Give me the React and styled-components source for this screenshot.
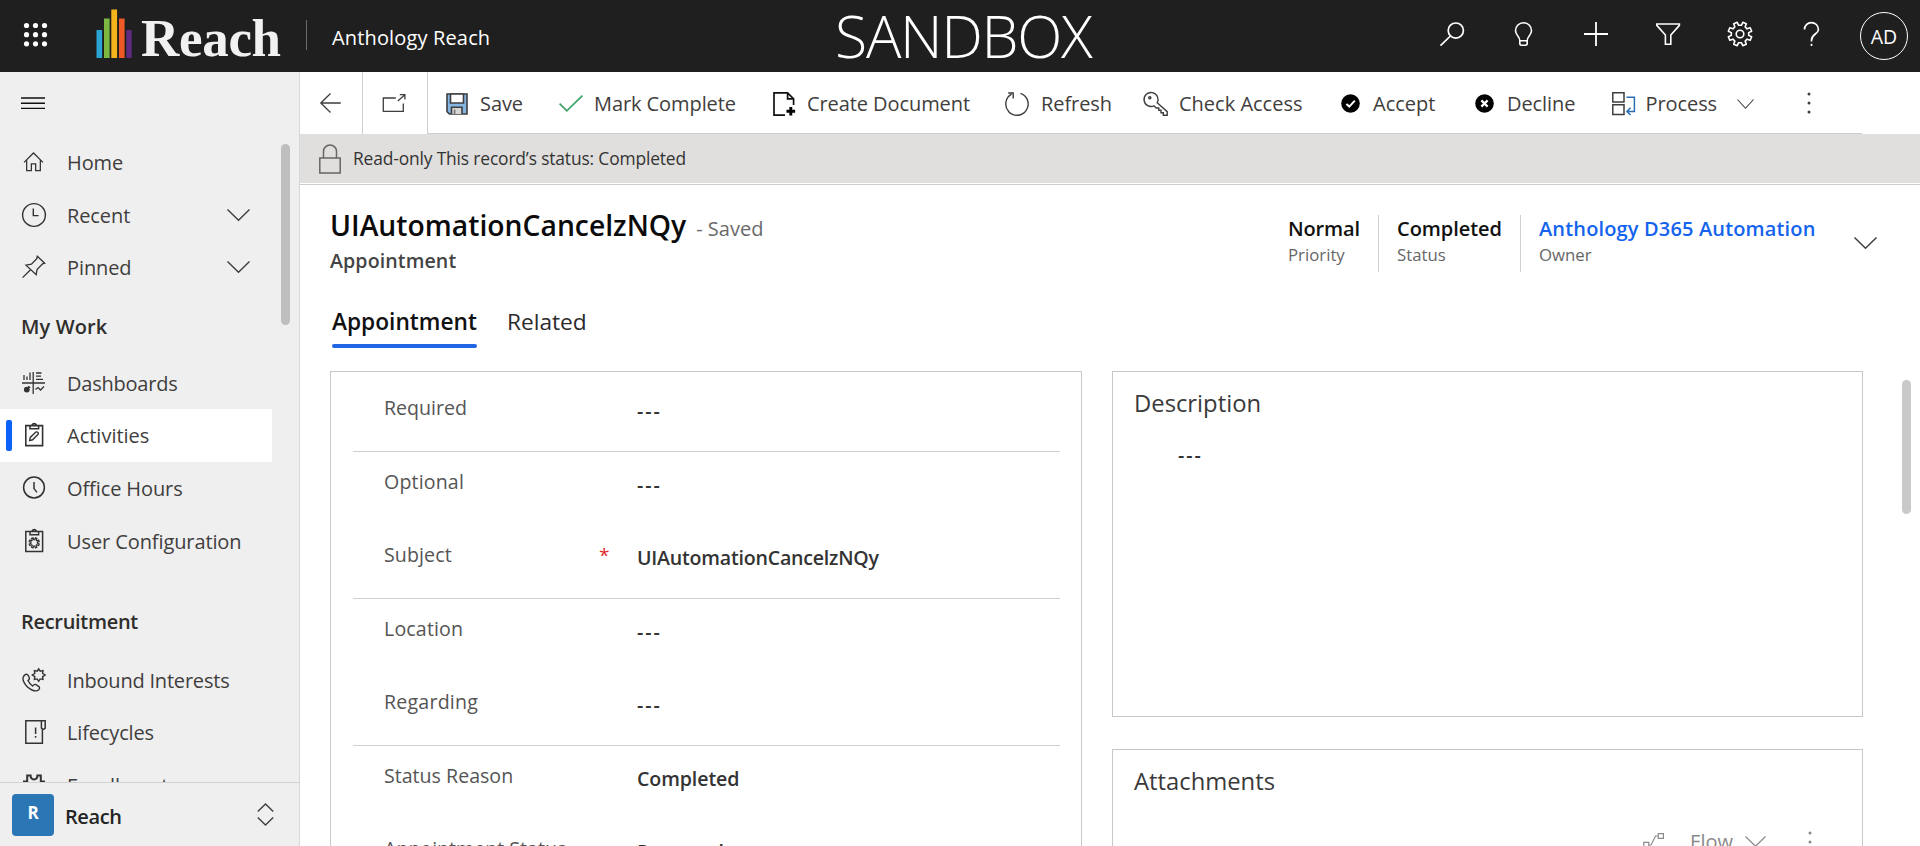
import React from "react";
import styled, { createGlobalStyle } from "styled-components";

const Global = createGlobalStyle`
  * { box-sizing: border-box; }
  body { margin: 0; overflow: hidden; }
`;

const Page = styled.div`
  width: 1920px;
  height: 846px;
  display: flex;
  flex-direction: column;
  overflow: hidden;
  background: #fff;
  color: #3f3e3d;
  font-family: "Open Sans", "Noto Sans", sans-serif;
  font-size: 20px;
  line-height: 28px;
  white-space: nowrap;
`;

const Label = styled.span`
  display: block;
  letter-spacing: ${(p) => p.$ls || 0}px;
`;

const Icon = styled.svg`
  display: block;
  flex: none;
  width: ${(p) => p.$w || 24}px;
  height: ${(p) => p.$h || p.$w || 24}px;
  fill: none;
  stroke: currentColor;
  stroke-width: ${(p) => p.$s || 1.5};
  overflow: visible;
`;

/* top bar */
const TopBar = styled.header`
  flex: none;
  height: 72px;
  display: flex;
  background: #1f1f1f;
  color: #fff;
`;
const Brand = styled.div`
  width: 835px;
  display: flex;
  align-items: flex-start;
  padding-left: 24px;
`;
const WaffleSlot = styled.div`
  width: 72px;
  padding-top: 23px;
`;
const BarsSlot = styled.div`
  width: 45px;
  padding-top: 9px;
`;
const LogoName = styled.div`
  width: 165px;
  padding-top: 8px;
  font: bold 53px/60px "Liberation Serif", serif;
  letter-spacing: -0.3px;
  color: #f1f1f1;
`;
const BrandDivider = styled.div`
  width: 1px;
  height: 30px;
  margin: 20px 25px 0 0;
  background: #6b6b6b;
`;
const AppName = styled(Label)`
  padding-top: 24px;
  font-weight: 500;
`;
const Environment = styled.div`
  width: 605px;
  font-size: 59px;
  font-weight: 300;
  line-height: 70px;
  letter-spacing: ${(p) => p.$ls}px;
`;
const TopActions = styled.nav`
  display: flex;
  gap: 48px;
  padding-top: 22px;
`;
const Avatar = styled.div`
  width: 48px;
  height: 48px;
  margin: 12px 0 0 36px;
  border: 1.5px solid #fff;
  border-radius: 50%;
  text-align: center;
  font-size: 19.5px;
  line-height: 48px;
  font-weight: 500;
`;

/* shell */
const Shell = styled.div`
  flex: 1;
  min-height: 0;
  display: flex;
`;
const Sidebar = styled.aside`
  flex: none;
  width: 300px;
  display: flex;
  flex-direction: column;
  background: #efefef;
  border-right: 1px solid #d6d6d6;
`;
const MenuButton = styled.div`
  flex: none;
  height: 64px;
  padding: 25px 0 0 21px;
  color: #111;
`;
const NavScroll = styled.div`
  flex: 1;
  min-height: 0;
  overflow: hidden;
  display: flex;
  justify-content: space-between;
`;
const NavList = styled.div`
  width: 272px;
`;
const ScrollThumb = styled.div`
  flex: none;
  width: 9px;
  height: ${(p) => p.$h}px;
  border-radius: 5px;
  background: ${(p) => p.$c};
`;
const NavThumb = styled(ScrollThumb)`
  margin: 8px 9px 0 0;
`;
const NavItem = styled.div`
  height: 52.6px;
  display: flex;
  align-items: center;
  padding-left: 6px;
  background: ${(p) => (p.$active ? "#fff" : "transparent")};
`;
const ActiveMark = styled.div`
  width: 6px;
  height: 31px;
  margin-right: 10px;
  border-radius: 2px;
  background: ${(p) => (p.$on ? "#0a62fb" : "transparent")};
`;
const NavIcon = styled.div`
  width: 45px;
  color: #333;
`;
const NavText = styled(Label)`
  flex: 1;
  padding-top: 2px;
`;
const NavChevron = styled.div`
  padding-right: 22px;
`;
const NavGroup = styled.div`
  height: ${(p) => p.$h}px;
  padding: ${(p) => p.$pt}px 0 0 21px;
  font-weight: 600;
  color: #2f2e2d;
`;
const AreaSwitch = styled.div`
  flex: none;
  height: 64px;
  border-top: 1px solid #d2d2d2;
  display: flex;
  align-items: center;
  padding: 0 25px 0 12px;
`;
const AreaBadge = styled.div`
  width: 42px;
  height: 42px;
  margin-right: 11px;
  border-radius: 4px;
  background: #2b76b5;
  color: #fff;
  font-size: 17px;
  font-weight: 700;
  line-height: 37px;
  text-align: center;
`;
const AreaName = styled(Label)`
  flex: 1;
  padding-top: 4px;
  font-weight: 600;
  color: #242424;
`;

/* main */
const Main = styled.main`
  flex: 1;
  min-width: 0;
  display: flex;
  flex-direction: column;
`;
const CommandBar = styled.div`
  flex: none;
  height: 62px;
  display: flex;
`;
const CommandCell = styled.div`
  width: ${(p) => p.$w}px;
  display: flex;
  justify-content: center;
  align-items: center;
  border-right: 1px solid #cfcfcf;
`;
const Commands = styled.div`
  width: 1434px;
  display: flex;
  align-items: center;
  border-bottom: 1px solid #cfcdcc;
  padding-left: 18px;
`;
const Command = styled.div`
  width: ${(p) => p.$w}px;
  display: flex;
  align-items: center;
  gap: ${(p) => p.$gap || 11}px;
  padding-top: 2px;
`;
const Banner = styled.div`
  flex: none;
  height: 51px;
  display: flex;
  align-items: center;
  gap: 12px;
  padding: 0 0 2px 19px;
  background: linear-gradient(#e0dfde 0 49px, #fff 49px 50px, #cdcdcd 50px);
  font-size: 17.4px;
  color: #333;
`;
const BannerText = styled(Label)`
  padding-bottom: 1px;
`;
const RecordHeader = styled.div`
  flex: none;
  height: 117px;
  display: flex;
  padding-left: 30px;
`;
const Heading = styled.div`
  width: 958px;
`;
const TitleRow = styled.div`
  display: flex;
  align-items: baseline;
  gap: 10px;
  height: 57px;
  padding-top: 21px;
`;
const Title = styled(Label)`
  font-size: 28.3px;
  line-height: 38px;
  font-weight: 600;
  color: #0b0b0b;
`;
const Saved = styled(Label)`
  color: #6a6a6a;
  font-size: 20px;
`;
const Entity = styled(Label)`
  padding-top: 5px;
  font-size: 19.6px;
  font-weight: 600;
  color: #444;
`;
const Summary = styled.div`
  width: ${(p) => p.$w}px;
  height: 57px;
  margin-top: 30px;
  border-right: ${(p) => (p.$last ? "0" : "1px solid #cfcfcf")};
  margin-right: 18px;
`;
const SummaryValue = styled(Label)`
  font-size: 20px;
  font-weight: 600;
  color: ${(p) => (p.$link ? "#1463ee" : "#111")};
`;
const SummaryName = styled(Label)`
  font-size: 16.8px;
  line-height: 24px;
  color: #666;
`;
const Expand = styled.div`
  padding-top: 52px;
`;
const Tabs = styled.div`
  flex: none;
  height: 69px;
  display: flex;
  gap: 30px;
  padding-left: 32px;
`;
const Tab = styled.div`
  height: 46px;
  padding-top: 4px;
  font-size: 22.7px;
  line-height: 32px;
  font-weight: ${(p) => (p.$on ? 600 : 400)};
  color: ${(p) => (p.$on ? "#111" : "#2b2b2b")};
`;
const TabLine = styled.div`
  height: 4px;
  margin-top: 6px;
  border-radius: 2px;
  background: #2266e3;
`;
const Body = styled.div`
  flex: 1;
  min-height: 0;
  display: flex;
  padding-left: 30px;
`;
const FormCard = styled.section`
  width: 752px;
  height: 520px;
  margin-right: 30px;
  padding: 0 21px 0 22px;
  border: 1px solid #c8c8c8;
`;
const FieldGroup = styled.div`
  padding-top: ${(p) => p.$pt}px;
  height: ${(p) => p.$h}px;
  border-bottom: 1px solid #d0cfce;
`;
const Field = styled.div`
  height: 73px;
  display: grid;
  grid-template-columns: 215px 38px 1fr;
  padding-left: 31px;
`;
const FieldName = styled(Label)`
  font-size: 19.6px;
  color: #555;
`;
const Required = styled.span`
  font-size: 19px;
  color: #e02b2b;
`;
const FieldValue = styled(Label)`
  padding-top: 3px;
  font-size: 19.6px;
  font-weight: 600;
  color: #333;
`;
const SideColumn = styled.div`
  width: 751px;
`;
const SideCard = styled.section`
  height: ${(p) => p.$h}px;
  margin-bottom: 32px;
  padding: 15px 21px;
  border: 1px solid #c8c8c8;
`;
const SideTitle = styled(Label)`
  font-size: 23.8px;
  line-height: 32px;
  color: #3a3a3a;
`;
const EmptyValue = styled.div`
  padding: 22px 0 0 44px;
  font-size: 19.6px;
  font-weight: 600;
  letter-spacing: 2px;
  color: #333;
`;
const SubCommands = styled.div`
  display: flex;
  justify-content: flex-end;
  align-items: flex-start;
  padding: 29px 29px 0 0;
  color: #8a8a8a;
`;
const FlowSlot = styled.div`
  padding-top: ${(p) => p.$pt}px;
`;
const FlowName = styled(Label)`
  margin: 2px 12px 0 25px;
`;
const FlowMore = styled.div`
  padding: 5px 0 0 42px;
`;
const BodyThumb = styled(ScrollThumb)`
  margin: 9px 0 0 39px;
`;

/* icons */
const Chevron = ({ w = 23, h = 12, s }) => (
  <Icon viewBox={`0 0 ${w} ${h}`} $w={w} $h={h} $s={s}>
    <path d={`M.5 .5 L${w / 2} ${h - 0.7} L${w - 0.5} .5`} />
  </Icon>
);
const MoreDots = () => (
  <Icon viewBox="0 0 4 22" $w={4} $h={22}>
    <g fill="currentColor" stroke="none">
      <circle cx="2" cy="2" r="1.5" />
      <circle cx="2" cy="11" r="1.5" />
      <circle cx="2" cy="20" r="1.5" />
    </g>
  </Icon>
);
const Waffle = () => (
  <Icon viewBox="0 0 24 24">
    <g fill="#fff" stroke="none">
      {[2.5, 11.7, 20.8].map((y) =>
        [2.5, 11.5, 20.5].map((x) => <circle key={`${x}-${y}`} cx={x} cy={y} r="2.6" />)
      )}
    </g>
  </Icon>
);
const LogoBars = () => (
  <Icon viewBox="0 0 36 49" $w={36} $h={49}>
    <g stroke="none">
      <rect x="0.5" y="21" width="5.6" height="28" fill="#2ba3d4" />
      <rect x="8" y="9.5" width="5.6" height="39.5" fill="#7db843" />
      <rect x="15.3" y="0.5" width="5.8" height="48.5" fill="#f6b31c" />
      <rect x="23" y="9.5" width="5.6" height="39.5" fill="#ee5a25" />
      <rect x="30.3" y="21" width="5.4" height="28" fill="#5e2a82" />
    </g>
  </Icon>
);

function gearPath(cx, cy, ro, ri, n) {
  const pts = [];
  const step = (Math.PI * 2) / n;
  for (let i = 0; i < n; i++) {
    const a = i * step - Math.PI / 2 + step / 2;
    [[-0.3, ri], [-0.2, ro], [0.2, ro], [0.3, ri]].forEach(([o, r]) => {
      pts.push(`${(cx + r * Math.cos(a + o * step)).toFixed(2)} ${(cy + r * Math.sin(a + o * step)).toFixed(2)}`);
    });
  }
  return `M${pts.join("L")}Z`;
}

const SearchIcon = () => (
  <Icon viewBox="0 0 24 24" $s={1.7}>
    <circle cx="15.8" cy="8.6" r="7.6" />
    <path d="M10.4 14 L.5 23.6" />
  </Icon>
);
const BulbIcon = () => (
  <Icon viewBox="0.5 0 24 24" $s={1.6}>
    <path d="M8.3 18.7 C8.3 14.5 4 12.8 4 8.7 A8 8 0 0 1 20 8.7 C20 12.8 15.7 14.5 15.7 18.7 Z M8.3 18.7 V21.3 Q8.3 23.2 10 23.2 H14 Q15.7 23.2 15.7 21.3 V18.7" />
  </Icon>
);
const PlusIcon = () => (
  <Icon viewBox="0 0 24 24" $s={1.8}>
    <path d="M12 0 V24 M0 12 H24" />
  </Icon>
);
const FunnelIcon = () => (
  <Icon viewBox="0 0 24 24" $s={1.6}>
    <path d="M.8 2 H23.4 V3.4 L14.8 13 V22.2 H9.4 V13 L.8 3.4 Z" />
  </Icon>
);
const GearIcon = () => (
  <Icon viewBox="0 0 24 24" $s={1.6}>
    <path d={gearPath(12, 12, 12, 8.8, 8)} strokeLinejoin="round" />
    <circle cx="12" cy="12" r="3.8" />
  </Icon>
);
const HelpIcon = () => (
  <Icon viewBox="0.5 0 24 24" $s={1.7}>
    <path d="M5 7.6 A6.9 6.9 0 0 1 18.9 7.4 C18.9 12.2 12 12 12 18.2 V19.4" />
    <path d="M12 21.8 V24" />
  </Icon>
);
const BackIcon = () => (
  <Icon viewBox="0 0 22 20" $w={22} $h={20} $s={1.3}>
    <path d="M10.5 .5 L.8 10 L10.5 19.5 M.8 10 H20.8" />
  </Icon>
);
const PopOutIcon = () => (
  <Icon viewBox="0.7 0 24 18" $w={24} $h={18} $s={1.3}>
    <path d="M13.5 4 H1 V17.3 H21 V9.5 M15.5 7 L22.6 .7 M17.5 .7 H22.6 V5.6" />
  </Icon>
);
const SaveIcon = () => (
  <Icon viewBox="0 0 22 22" $w={22} $h={22} $s={1.6}>
    <path d="M1 1 H21 V21 H3.4 L1 18.6 Z" fill="#86b6e3" />
    <path d="M4.5 1 H17.5 V10 H4.5 Z" fill="#fff" />
    <path d="M5.5 21 V14.3 H16 V21" fill="#d5d5d5" />
    <path d="M8.6 16.5 V21" stroke="#777" />
  </Icon>
);
const CheckIcon = () => (
  <Icon viewBox="0 0 24 17" $w={24} $h={17} $s={1.7}>
    <path d="M.6 8.6 L7.8 15.8 L23.4 .6" stroke="#3fa36a" />
  </Icon>
);
const DocumentIcon = () => (
  <Icon viewBox="0 0 24 24" $s={1.7}>
    <path d="M12 23.2 H1 V.9 H14.6 L20.6 6.8 V13 M14.6 .9 V6.8 H20.6" stroke="#111" />
    <path d="M17.8 15 V23.6 M13.5 19.3 H22.1" stroke="#000" strokeWidth="2.9" />
  </Icon>
);
const RefreshIcon = () => (
  <Icon viewBox="0 0 24 24" $s={1.4}>
    <path d="M15.5 1.4 A11.2 11.2 0 1 1 6.6 2.2 M3.2 1 H8.2 V6.4" />
  </Icon>
);
const KeyIcon = () => (
  <Icon viewBox="0 0 24 24" $s={1.4}>
    <path d="M13.2 10.8 L23.2 19.6 V23.2 H19.3 V20.8 H17 V18.3 H14.8 V16 H12.2 L10 13.8 A7 7 0 1 1 13.2 10.8 Z" />
    <circle cx="5.8" cy="5.8" r="1.1" />
  </Icon>
);
const AcceptIcon = () => (
  <Icon viewBox="0 0 19 19" $w={19}>
    <circle cx="9.5" cy="9.5" r="9.3" fill="#000" stroke="none" />
    <path d="M5.4 9.9 L8.3 12.6 L13.8 6.6" stroke="#fff" strokeWidth="2" />
  </Icon>
);
const DeclineIcon = () => (
  <Icon viewBox="0 0 19 19" $w={19}>
    <circle cx="9.5" cy="9.5" r="9.3" fill="#000" stroke="none" />
    <path d="M6.4 6.4 L12.6 12.6 M12.6 6.4 L6.4 12.6" stroke="#fff" strokeWidth="2.2" />
  </Icon>
);
const ProcessIcon = () => (
  <Icon viewBox="0 0 24 24" $s={1.5}>
    <path d="M.8 .8 H12 V10 H.8 Z M.8 12.8 H12 V22.4 H.8 Z" />
    <path d="M14.5 5.2 H22.4 V19.5 H15.2 M18.6 15.8 L14.9 19.5 L18.6 23" stroke="#2a6fb5" />
  </Icon>
);
const LockIcon = () => (
  <Icon viewBox="0 0 22 30" $w={22} $h={30} $s={1.5}>
    <path d="M.8 14 H21.2 V29 H.8 Z M4.5 14 V7.5 A6.5 6.5 0 0 1 17.5 7.5 V14" stroke="#666" />
  </Icon>
);
const HomeIcon = () => (
  <Icon viewBox="0.5 0 24 24" $s={1.4}>
    <path d="M1.5 12.4 L12 2 L22.5 12.4 M4.4 9.6 V21.6 H9.6 V14.2 H14.4 V21.6 H19.6 V9.6" transform="translate(1.2 1.2) scale(.9)" />
  </Icon>
);
const RecentIcon = () => (
  <Icon viewBox="0 0 24 24" $s={1.4}>
    <circle cx="12" cy="12" r="11.4" />
    <path d="M11.3 5.5 V12.6 H16.6" />
  </Icon>
);
const PinIcon = () => (
  <Icon viewBox="0 0 24 24" $s={1.3}>
    <path d="M15.3 1.2 L22.7 8.2 L20.6 8.9 L15 14.6 L14.2 19.8 L4 10.2 L9.4 9.2 L14.8 3.6 Z M8.3 15 L.6 22.6" />
  </Icon>
);
const DashboardIcon = () => (
  <Icon viewBox="0 0 24 24" $s={1.3}>
    <path d="M0 12 H23 M11.2 1 V23 M2 9 V4 M5 9 V5.6 M8 9 V1.5 M14 2 H19.5 M14 5.2 H19 M14 8.4 H21 M13.5 18.5 L16 16.5 L18.5 19 L22 15.5" />
    <circle cx="4.8" cy="18.6" r="2.9" fill="#333" stroke="none" />
    <path d="M6 17 V14.8 A3 3 0 0 1 8.6 17 Z" fill="#333" stroke="none" />
  </Icon>
);
const ActivityIcon = () => (
  <Icon viewBox="0 0 24 24" $s={1.6}>
    <path d="M3.8 2.6 H20.6 V22.6 H3.8 Z M8 2.6 V5.8 H16.6 V2.6 M9.6 2.4 Q12.2 -1.4 14.8 2.4" />
    <path d="M7.6 17.6 L8.3 14.4 L13.6 9.2 Q15 8.4 16 9.4 Q16.8 10.6 15.9 11.6 L10.6 16.8 Z" strokeWidth="1.4" />
  </Icon>
);
const OfficeIcon = () => (
  <Icon viewBox="0 0 24 24" $s={1.5}>
    <circle cx="12" cy="11.5" r="10.4" />
    <path d="M12 6 V12.6 L15 16.4" />
  </Icon>
);
const ConfigIcon = () => (
  <Icon viewBox="0 0 24 24" $s={1.5}>
    <path d="M3.8 2.6 H20.6 V22.6 H3.8 Z M8 2.6 V5.8 H16.6 V2.6 M9.6 2.4 Q12.2 -1.4 14.8 2.4" />
    <path d={gearPath(12.2, 13.8, 5.2, 3.3, 8)} strokeWidth="1.2" />
  </Icon>
);
const InboundIcon = () => (
  <Icon viewBox="0 0 24 24" $s={1.4}>
    <path d="M3.6 6.4 Q5.4 6 6.4 7.8 L7.4 10 Q7.6 11.4 6 12.6 Q7.4 16 10.6 18 Q12.4 15.8 14 16.6 L17.4 19 Q18 20.4 16.6 22 Q14 23.8 10 22 Q3.6 19 1.2 12.6 Q.2 8.4 3.6 6.4 Z" />
    <path d="M16.7 .8 L18.2 3.2 L21 2.6 L20.6 5.4 L23.1 7 L20.6 8.6 L21 11.4 L18.2 10.9 L16.7 13.3 L15.2 10.9 L12.4 11.4 L12.8 8.6 L10.3 7 L12.8 5.4 L12.4 2.6 L15.2 3.2 Z" />
  </Icon>
);
const LifecycleIcon = () => (
  <Icon viewBox="0 0 24 24" $s={1.5}>
    <path d="M20.4 .8 H3.8 V23.2 H20.4 V9 M19.4 .8 V8 Q21.3 10.5 23.2 8 V.8 H19.4" />
    <path d="M13.6 7.5 V14 M13.6 16 V17.8" />
  </Icon>
);
const EnrollIcon = () => (
  <Icon viewBox="0 0 24 24" $s={2}>
    <path d="M2 8.4 H5.2 V2.6 H8.6 Q8.6 6.4 12 6.4 Q15.4 6.4 15.4 2.6 H18.8 V8.4 H22 V22 H2 Z" />
  </Icon>
);
const UpDownIcon = () => (
  <Icon viewBox="0 0 17 23" $w={17} $h={23} $s={1.4}>
    <path d="M.8 8.6 L8.5 1 L16.2 8.6 M.8 14.4 L8.5 22 L16.2 14.4" />
  </Icon>
);
const FlowIcon = () => (
  <Icon viewBox="0 0 22 18" $w={22} $h={18} $s={1.2}>
    <path d="M15.2 .6 H20.4 V5.4 H15.2 Z M.8 9.4 H5.8 V14.6 H.8 Z M5.8 12 H8 L12.6 3 H15.2" />
  </Icon>
);

const NavRow = ({ icon: I, text, ls = -0.1, chevron, active }) => (
  <NavItem $active={active}>
    <ActiveMark $on={active} />
    <NavIcon><I /></NavIcon>
    <NavText $ls={ls}>{text}</NavText>
    {chevron && <NavChevron><Chevron s={1.4} /></NavChevron>}
  </NavItem>
);

const Cmd = ({ icon: I, text, w, gap, ls = -0.08 }) => (
  <Command $w={w} $gap={gap}>
    <I />
    <Label $ls={ls}>{text}</Label>
  </Command>
);

const FieldRow = ({ name, value, required, ls, vls }) => (
  <Field>
    <FieldName $ls={ls}>{name}</FieldName>
    <Required>{required ? "*" : ""}</Required>
    <FieldValue $ls={value ? vls : 2}>{value || "---"}</FieldValue>
  </Field>
);

export default function App() {
  return (
    <Page>
      <Global />
      <TopBar>
        <Brand>
          <WaffleSlot><Waffle /></WaffleSlot>
          <BarsSlot><LogoBars /></BarsSlot>
          <LogoName>Reach</LogoName>
          <BrandDivider />
          <AppName $ls={0.15}>Anthology Reach</AppName>
        </Brand>
        <Environment $ls={-1.3}>SANDBOX</Environment>
        <TopActions>
          <SearchIcon />
          <BulbIcon />
          <PlusIcon />
          <FunnelIcon />
          <GearIcon />
          <HelpIcon />
        </TopActions>
        <Avatar>AD</Avatar>
      </TopBar>
      <Shell>
        <Sidebar>
          <MenuButton>
            <Icon viewBox="0 0 24 12" $w={24} $h={12} $s={1.4}>
              <path d="M0 1 H24 M0 6.2 H24 M0 11.4 H24" />
            </Icon>
          </MenuButton>
          <NavScroll>
            <NavList>
              <NavRow icon={HomeIcon} text="Home" />
              <NavRow icon={RecentIcon} text="Recent" chevron />
              <NavRow icon={PinIcon} text="Pinned" chevron />
              <NavGroup $h={62.8} $pt={19}><Label $ls={0.1}>My Work</Label></NavGroup>
              <NavRow icon={DashboardIcon} text="Dashboards" ls={-0.22} />
              <NavRow icon={ActivityIcon} text="Activities" ls={0} active />
              <NavRow icon={OfficeIcon} text="Office Hours" />
              <NavRow icon={ConfigIcon} text="User Configuration" />
              <NavGroup $h={86.6} $pt={41}><Label $ls={-0.3}>Recruitment</Label></NavGroup>
              <NavRow icon={InboundIcon} text="Inbound Interests" ls={-0.2} />
              <NavRow icon={LifecycleIcon} text="Lifecycles" ls={-0.15} />
              <NavRow icon={EnrollIcon} text="Enrollments" ls={-0.15} />
            </NavList>
            <NavThumb $h={181} $c="#bebebe" />
          </NavScroll>
          <AreaSwitch>
            <AreaBadge>R</AreaBadge>
            <AreaName $ls={-0.4}>Reach</AreaName>
            <UpDownIcon />
          </AreaSwitch>
        </Sidebar>
        <Main>
          <CommandBar>
            <CommandCell $w={63}><BackIcon /></CommandCell>
            <CommandCell $w={65}><PopOutIcon /></CommandCell>
            <Commands>
              <Cmd icon={SaveIcon} text="Save" w={113} gap={12} />
              <Cmd icon={CheckIcon} text="Mark Complete" w={214} />
              <Cmd icon={DocumentIcon} text="Create Document" w={232} gap={10} />
              <Cmd icon={RefreshIcon} text="Refresh" w={139} gap={12} />
              <Cmd icon={KeyIcon} text="Check Access" w={197} ls={0} />
              <Cmd icon={AcceptIcon} text="Accept" w={134} gap={13} ls={0} />
              <Cmd icon={DeclineIcon} text="Decline" w={137} gap={13} />
              <Cmd icon={ProcessIcon} text="Process" w={125} gap={9.5} />
              <Command $w={70}><Chevron w={17} h={10} s={1.1} /></Command>
              <MoreDots />
            </Commands>
          </CommandBar>
          <Banner>
            <LockIcon />
            <BannerText $ls={-0.15}>Read-only This record’s status: Completed</BannerText>
          </Banner>
          <RecordHeader>
            <Heading>
              <TitleRow>
                <Title>UIAutomationCancelzNQy</Title>
                <Saved>- Saved</Saved>
              </TitleRow>
              <Entity $ls={0.1}>Appointment</Entity>
            </Heading>
            <Summary $w={91}>
              <SummaryValue $ls={-0.15}>Normal</SummaryValue>
              <SummaryName>Priority</SummaryName>
            </Summary>
            <Summary $w={124}>
              <SummaryValue $ls={-0.05}>Completed</SummaryValue>
              <SummaryName>Status</SummaryName>
            </Summary>
            <Summary $w={297} $last>
              <SummaryValue $link $ls={0.15}>Anthology D365 Automation</SummaryValue>
              <SummaryName>Owner</SummaryName>
            </Summary>
            <Expand><Chevron /></Expand>
          </RecordHeader>
          <Tabs>
            <Tab $on>
              <Label>Appointment</Label>
              <TabLine />
            </Tab>
            <Tab><Label>Related</Label></Tab>
          </Tabs>
          <Body>
            <FormCard>
              <FieldGroup $pt={22} $h={80}>
                <FieldRow name="Required" />
              </FieldGroup>
              <FieldGroup $pt={16} $h={147}>
                <FieldRow name="Optional" ls={0.15} />
                <FieldRow name="Subject" required value="UIAutomationCancelzNQy" vls={-0.22} ls={0.1} />
              </FieldGroup>
              <FieldGroup $pt={16} $h={147}>
                <FieldRow name="Location" ls={0.15} />
                <FieldRow name="Regarding" ls={0.2} />
              </FieldGroup>
              <FieldGroup $pt={16} $h={147}>
                <FieldRow name="Status Reason" value="Completed" vls={-0.1} />
                <FieldRow name="Appointment Status" value="Reserved" />
              </FieldGroup>
            </FormCard>
            <SideColumn>
              <SideCard $h={346}>
                <SideTitle>Description</SideTitle>
                <EmptyValue>---</EmptyValue>
              </SideCard>
              <SideCard $h={346}>
                <SideTitle>Attachments</SideTitle>
                <SubCommands>
                  <FlowSlot $pt={7}><FlowIcon /></FlowSlot>
                  <FlowName>Flow</FlowName>
                  <FlowSlot $pt={10}><Chevron w={21} h={11} s={1.2} /></FlowSlot>
                  <FlowMore><MoreDots /></FlowMore>
                </SubCommands>
              </SideCard>
            </SideColumn>
            <BodyThumb $h={134} $c="#c9c9c9" />
          </Body>
        </Main>
      </Shell>
    </Page>
  );
}
